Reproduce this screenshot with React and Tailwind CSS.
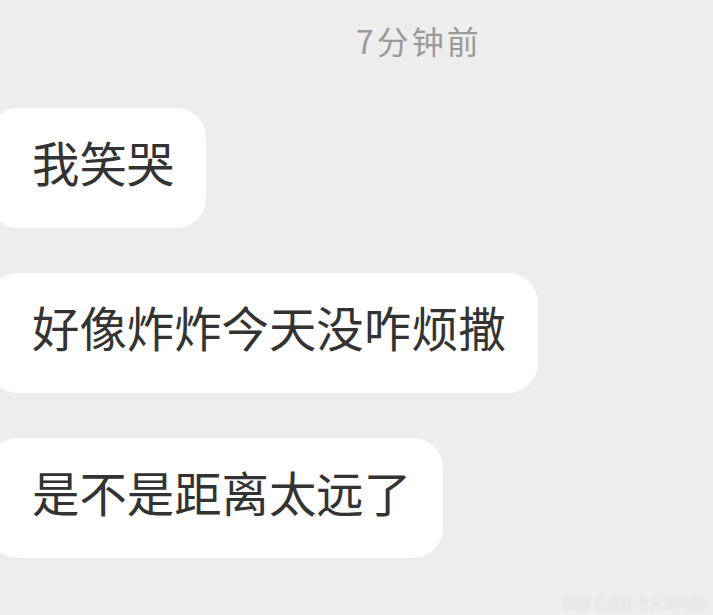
export default function App() {
  const font = { fontFamily: '"Noto Sans CJK SC", "Noto Sans", sans-serif' };
  const bubbles = ["我笑哭", "好像炸炸今天没咋烦撒", "是不是距离太远了"];
  return (
    <div className="w-[713px] h-[615px] bg-[#ededed] overflow-hidden relative" style={font}>
      <div className="pt-[24px] pl-[356px] h-[108px] text-[32px] leading-[32px] tracking-[3px] text-[#9a9a9a]">
        7分钟前
      </div>
      <div className="flex flex-col items-start gap-[45px]">
        {bubbles.map((t) => (
          <div
            key={t}
            className="ml-[-12px] h-[120px] flex items-center bg-white rounded-[30px] pl-[44px] pr-[32px] pb-[12px] text-[47.4px] leading-none text-[#333333] whitespace-nowrap"
          >
            {t}
          </div>
        ))}
      </div>
      <div className="absolute right-[8px] bottom-[6px] text-[14px] leading-none text-[#e2e2e2] blur-[1px]">
        微博 @炸炸今天没咋烦
      </div>
    </div>
  );
}
